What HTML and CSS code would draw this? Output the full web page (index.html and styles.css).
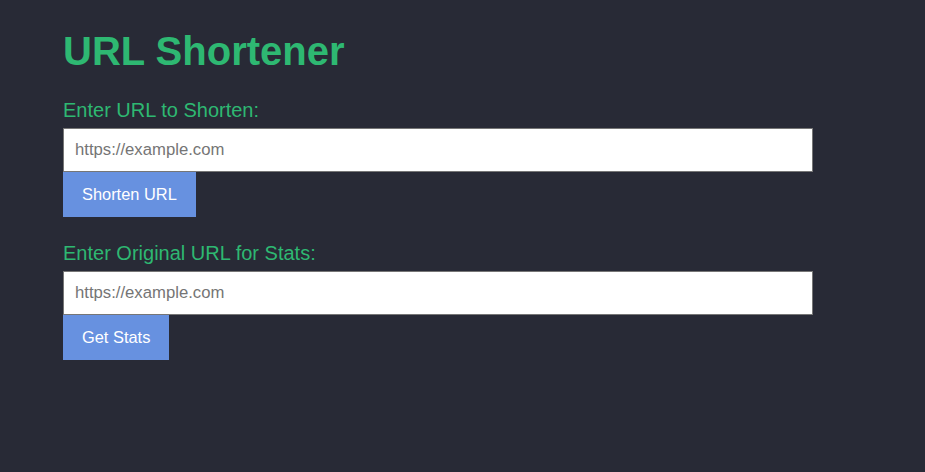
FILE: index.html
```html
<!DOCTYPE html>
<html lang="en">
<head>
<meta charset="utf-8">
<title>URL Shortener</title>
<link rel="stylesheet" href="styles.css">
</head>
<body>
<main class="app">
  <h1 class="title">URL Shortener</h1>
  <section class="section">
    <label class="label" for="shorten">Enter URL to Shorten:</label>
    <input class="input" id="shorten" type="text" placeholder="https://example.com">
    <button class="btn" type="button">Shorten URL</button>
  </section>
  <section class="section">
    <label class="label" for="stats">Enter Original URL for Stats:</label>
    <input class="input" id="stats" type="text" placeholder="https://example.com">
    <button class="btn" type="button">Get Stats</button>
  </section>
</main>
</body>
</html>
```
FILE: styles.css
```css
html, body {
  margin: 0;
  background: #282a36;
}
body {
  font-family: "Liberation Sans", Arial, sans-serif;
  min-height: 472px;
}
.app {
  padding: 28px 63px 0;
  display: flex;
  flex-direction: column;
}
.title {
  margin: 0 0 24px;
  font-size: 40px;
  line-height: 46px;
  font-weight: 700;
  color: #2eb872;
}
.section {
  display: flex;
  flex-direction: column;
  align-items: flex-start;
  margin-bottom: 24px;
}
.label {
  display: block;
  font-size: 20px;
  line-height: 24px;
  color: #2eb872;
  margin-bottom: 6px;
}
.input {
  box-sizing: border-box;
  width: 750px;
  height: 44px;
  padding: 12px 11px;
  border: 1px solid #767676;
  background: #fff;
  font-family: "Liberation Sans", Arial, sans-serif;
  font-size: 16.7px;
  color: #222;
  margin: 0;
  outline: none;
}
.input::placeholder {
  color: #757575;
}
.btn {
  box-sizing: border-box;
  height: 45px;
  padding: 0 19px;
  border: none;
  margin: 0;
  background: #6791e0;
  color: #fff;
  font-family: "Liberation Sans", Arial, sans-serif;
  font-size: 16.4px;
  cursor: pointer;
}
```
